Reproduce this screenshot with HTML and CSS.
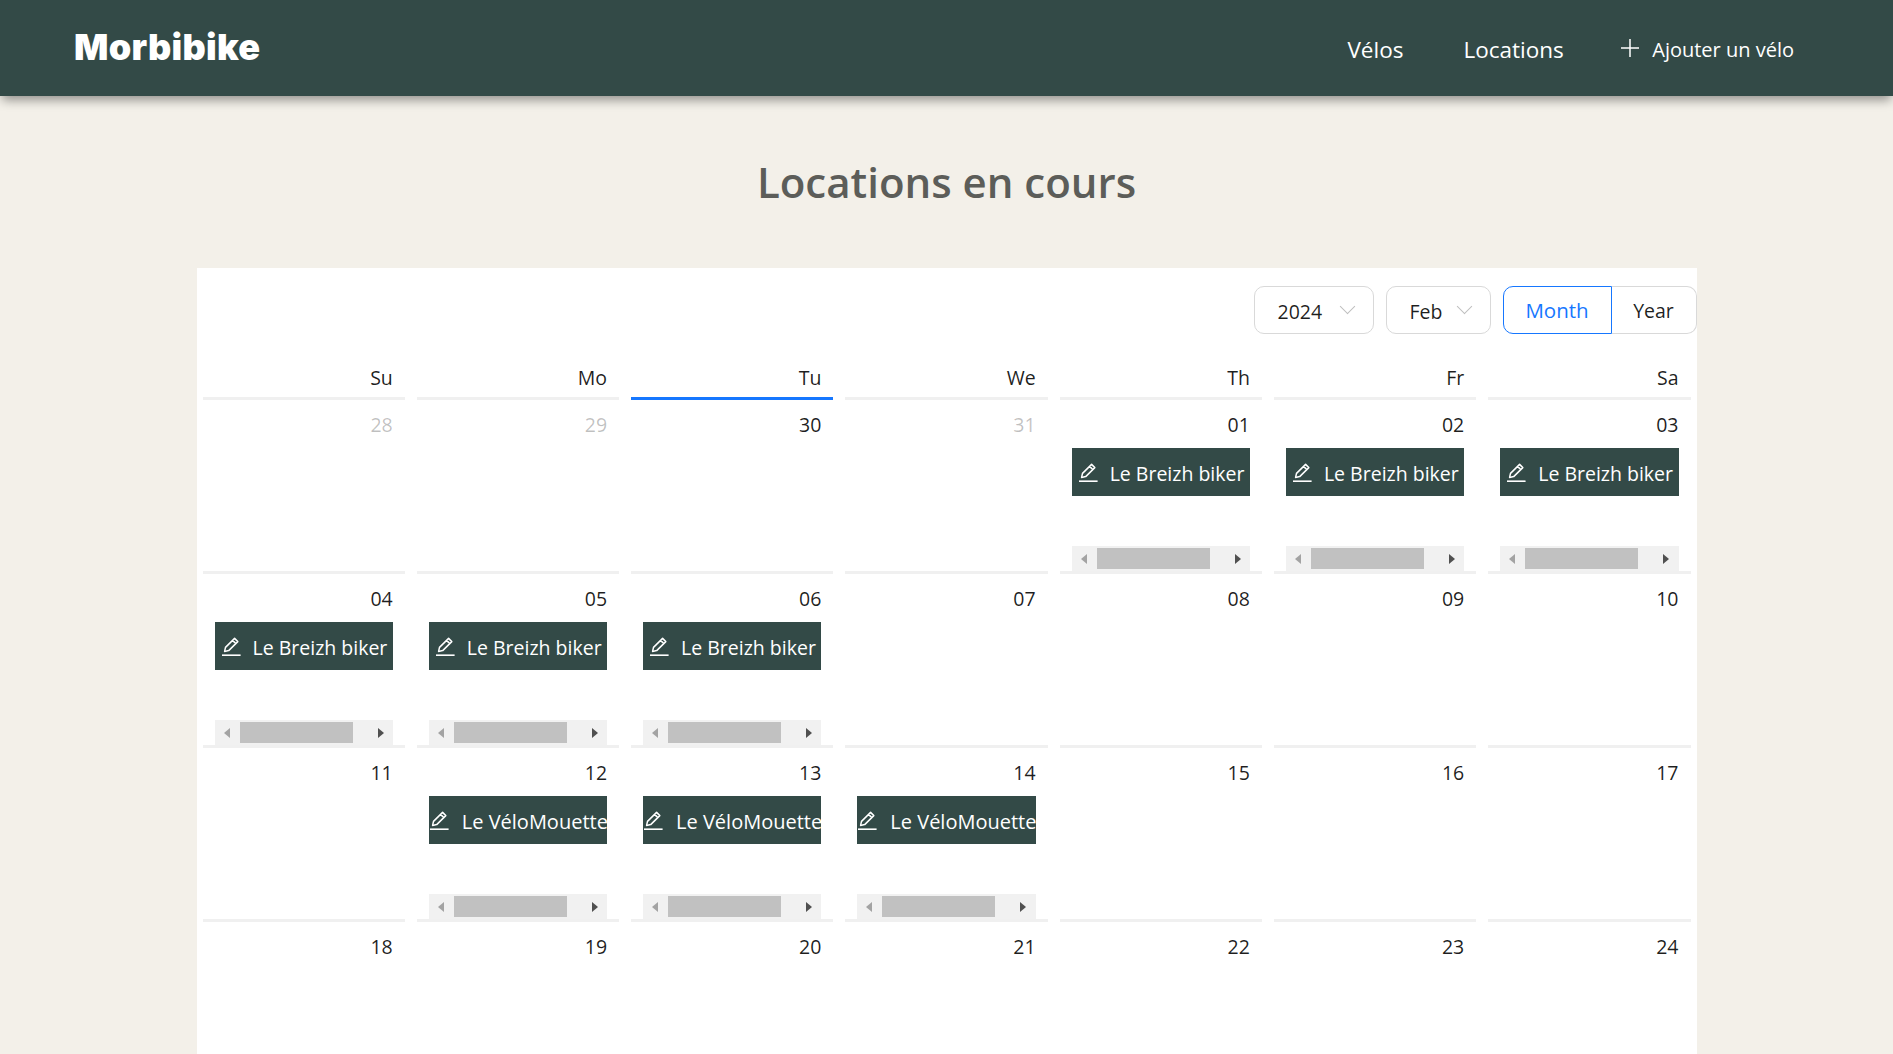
FILE: index.html
```html
<!DOCTYPE html>
<html lang="fr">
<head>
	<meta charset="utf-8">
	<title>Morbibike</title>
	<link rel="stylesheet" href="styles.css">
</head>
<body>
	<svg class="sprites" width="0" height="0">
		<symbol id="edit" viewBox="0 0 20 20">
			<path d="M1 19.2h18.6" fill="none" stroke="currentColor" stroke-width="1.6"/>
			<path d="M3.6 15.4l.9-4L13.6 2.4l3.2 3.2-9.1 9-4.1.8zM11.6 4.4l3.2 3.2" fill="none" stroke="currentColor" stroke-width="1.5" stroke-linejoin="round"/>
		</symbol>
	</svg>
	<header class="topbar">
		<a class="logo">Morbibike</a>
		<nav class="nav">
			<a class="nav-link">Vélos</a>
			<a class="nav-link">Locations</a>
			<a class="nav-add">
				<svg class="plus" viewBox="0 0 18 18" width="18" height="18"><path d="M9 0v18M0 9h18" stroke="currentColor" stroke-width="1.5" fill="none"/></svg>
				Ajouter un vélo
			</a>
		</nav>
	</header>
	<main class="main">
		<h1 class="title">Locations en cours</h1>
		<section class="calendar">
			<div class="toolbar">
				<div class="select select-year">2024<span class="chevron"></span></div>
				<div class="select select-month">Feb<span class="chevron"></span></div>
				<div class="mode">
					<span class="mode-btn mode-month">Month</span>
					<span class="mode-btn mode-year">Year</span>
				</div>
			</div>
			<div class="weekdays">
				<div>Su</div><div>Mo</div><div>Tu</div><div>We</div><div>Th</div><div>Fr</div><div>Sa</div>
			</div>
			<div class="grid">
				<div class="cell muted"><div class="num">28</div></div>
				<div class="cell muted"><div class="num">29</div></div>
				<div class="cell today"><div class="num">30</div></div>
				<div class="cell muted"><div class="num">31</div></div>
				<div class="cell"><div class="num">01</div>
					<div class="event"><svg class="edit"><use href="#edit"/></svg><span>Le Breizh biker</span></div>
					<div class="scroll"><i class="arrow-l"></i><i class="thumb"></i><i class="arrow-r"></i></div>
				</div>
				<div class="cell"><div class="num">02</div>
					<div class="event"><svg class="edit"><use href="#edit"/></svg><span>Le Breizh biker</span></div>
					<div class="scroll"><i class="arrow-l"></i><i class="thumb"></i><i class="arrow-r"></i></div>
				</div>
				<div class="cell"><div class="num">03</div>
					<div class="event"><svg class="edit"><use href="#edit"/></svg><span>Le Breizh biker</span></div>
					<div class="scroll"><i class="arrow-l"></i><i class="thumb"></i><i class="arrow-r"></i></div>
				</div>

				<div class="cell"><div class="num">04</div>
					<div class="event"><svg class="edit"><use href="#edit"/></svg><span>Le Breizh biker</span></div>
					<div class="scroll"><i class="arrow-l"></i><i class="thumb"></i><i class="arrow-r"></i></div>
				</div>
				<div class="cell"><div class="num">05</div>
					<div class="event"><svg class="edit"><use href="#edit"/></svg><span>Le Breizh biker</span></div>
					<div class="scroll"><i class="arrow-l"></i><i class="thumb"></i><i class="arrow-r"></i></div>
				</div>
				<div class="cell"><div class="num">06</div>
					<div class="event"><svg class="edit"><use href="#edit"/></svg><span>Le Breizh biker</span></div>
					<div class="scroll"><i class="arrow-l"></i><i class="thumb"></i><i class="arrow-r"></i></div>
				</div>
				<div class="cell"><div class="num">07</div></div>
				<div class="cell"><div class="num">08</div></div>
				<div class="cell"><div class="num">09</div></div>
				<div class="cell"><div class="num">10</div></div>

				<div class="cell"><div class="num">11</div></div>
				<div class="cell"><div class="num">12</div>
					<div class="event event-long"><svg class="edit"><use href="#edit"/></svg><span>Le VéloMouette</span></div>
					<div class="scroll"><i class="arrow-l"></i><i class="thumb"></i><i class="arrow-r"></i></div>
				</div>
				<div class="cell"><div class="num">13</div>
					<div class="event event-long"><svg class="edit"><use href="#edit"/></svg><span>Le VéloMouette</span></div>
					<div class="scroll"><i class="arrow-l"></i><i class="thumb"></i><i class="arrow-r"></i></div>
				</div>
				<div class="cell"><div class="num">14</div>
					<div class="event event-long"><svg class="edit"><use href="#edit"/></svg><span>Le VéloMouette</span></div>
					<div class="scroll"><i class="arrow-l"></i><i class="thumb"></i><i class="arrow-r"></i></div>
				</div>
				<div class="cell"><div class="num">15</div></div>
				<div class="cell"><div class="num">16</div></div>
				<div class="cell"><div class="num">17</div></div>

				<div class="cell"><div class="num">18</div></div>
				<div class="cell"><div class="num">19</div></div>
				<div class="cell"><div class="num">20</div></div>
				<div class="cell"><div class="num">21</div></div>
				<div class="cell"><div class="num">22</div></div>
				<div class="cell"><div class="num">23</div></div>
				<div class="cell"><div class="num">24</div></div>
			</div>
		</section>
	</main>
</body>
</html>
```
FILE: styles.css
```css
html, body {
	height: 100%;
	margin: 0;
	overflow: hidden;
}
body {
	display: flex;
	flex-direction: column;
	background-color: #f3f0e9;
	font-family: "Open Sans", "Noto Sans", sans-serif;
	color: rgba(0, 0, 0, 0.88);
}
.sprites {
	position: absolute;
}
.topbar {
	flex: none;
	height: 96px;
	display: flex;
	align-items: center;
	justify-content: space-between;
	padding: 0 99px 0 74px;
	background-color: #334a47;
	box-shadow: 0 6px 10px -2px rgba(0, 0, 0, 0.4);
	color: #fff;
	position: relative;
}
.logo {
	font-family: "Inter", sans-serif;
	font-size: 36px;
	font-weight: 900;
	letter-spacing: 0.3px;
	line-height: 1;
	margin-bottom: 2px;
}
.nav {
	display: flex;
	align-items: center;
	font-size: 22.5px;
	padding-top: 3px;
}
.nav-link {
	margin-right: 60px;
}
.nav-link + .nav-link {
	margin-right: 57.5px;
}
.nav-add {
	display: flex;
	align-items: center;
	font-size: 20px;
}
.plus {
	margin-right: 13px;
	margin-top: -3px;
}
.main {
	flex: 1;
	min-height: 0;
	display: flex;
	flex-direction: column;
	align-items: center;
}
.title {
	margin: 54px 0 55px;
	font-size: 42px;
	line-height: 63px;
	font-weight: 600;
	color: #5c5d59;
}
.calendar {
	flex: 1;
	min-height: 0;
	width: 1500px;
	background-color: #fff;
	overflow: hidden;
	font-size: 19.5px;
}
.toolbar {
	display: flex;
	justify-content: flex-end;
	padding-top: 18px;
	height: 48px;
}
.select {
	display: flex;
	align-items: center;
	height: 48px;
	box-sizing: border-box;
	border: 1px solid #d9d9d9;
	border-radius: 10px;
	padding: 2px 0 0 23px;
	margin-right: 12px;
}
.select-year {
	width: 120px;
}
.select-month {
	width: 105px;
}
.chevron {
	width: 10px;
	height: 10px;
	margin-left: 20px;
	margin-top: -9px;
	border-right: 1.5px solid #bfbfbf;
	border-bottom: 1.5px solid #bfbfbf;
	transform: rotate(45deg);
}
.select-month .chevron {
	margin-left: 17px;
}
.mode {
	display: flex;
	height: 48px;
}
.mode-btn {
	display: flex;
	align-items: center;
	justify-content: center;
	box-sizing: border-box;
	border: 1px solid #d9d9d9;
}
.mode-month {
	width: 109px;
	border-color: #1677ff;
	border-radius: 10px 0 0 10px;
	color: #1677ff;
	font-size: 20.5px;
}
.mode-year {
	width: 85px;
	border-left: none;
	border-radius: 0 10px 10px 0;
}
.weekdays, .grid {
	display: grid;
	grid-template-columns: repeat(7, 1fr);
	column-gap: 12px;
	padding: 0 6px;
}
.weekdays {
	height: 63px;
	align-items: end;
	text-align: right;
}
.weekdays div {
	padding: 0 12px 6px 0;
	line-height: 26px;
}
.grid {
	grid-auto-rows: 174px;
}
.cell {
	display: flex;
	flex-direction: column;
	min-width: 0;
	border-top: 3px solid #f0f0f0;
	padding: 0 12px;
}
.today {
	border-top-color: #1677ff;
}
.muted {
	color: rgba(0, 0, 0, 0.25);
}
.num {
	height: 48px;
	line-height: 50px;
	text-align: right;
}
.event {
	flex: none;
	height: 48px;
	display: flex;
	align-items: center;
	padding-left: 6px;
	background-color: #334a47;
	color: #fff;
	white-space: nowrap;
	overflow: hidden;
}
.event span {
	padding-top: 2px;
}
.event-long {
	padding-left: 0;
	font-size: 20px;
}
.edit {
	flex: none;
	width: 20px;
	height: 20px;
	margin-right: 12px;
}
.event-long .edit {
	margin-right: 13px;
}
.scroll {
	flex: none;
	display: flex;
	align-items: center;
	height: 25px;
	margin-top: auto;
	background-color: #f1f1f1;
}
.thumb {
	width: 113px;
	height: 21px;
	margin: 0 25px 0 10px;
	background-color: #c1c1c1;
}
.arrow-l, .arrow-r {
	width: 0;
	height: 0;
	border-top: 5.5px solid transparent;
	border-bottom: 5.5px solid transparent;
}
.arrow-l {
	margin-left: 9px;
	border-right: 6px solid #a3a3a3;
}
.arrow-r {
	border-left: 6px solid #505050;
}
```
